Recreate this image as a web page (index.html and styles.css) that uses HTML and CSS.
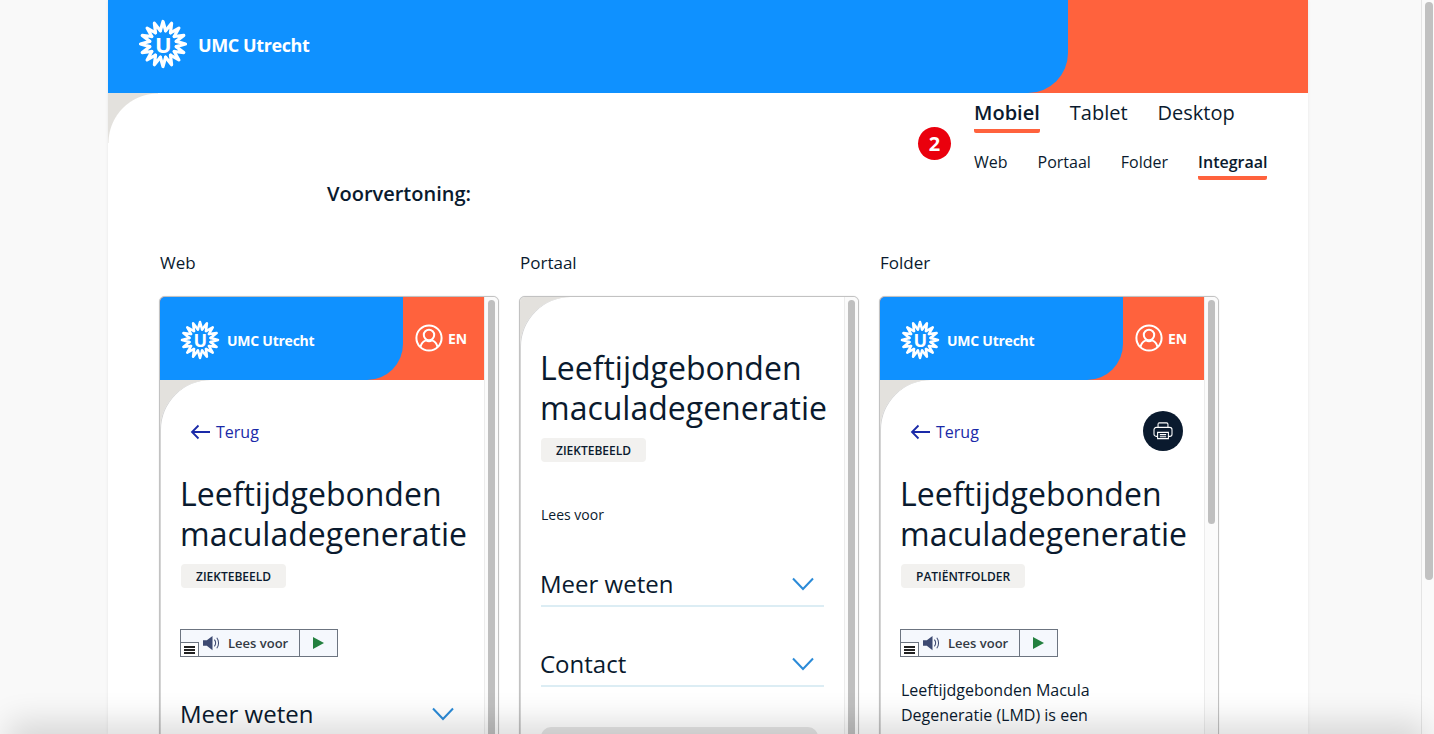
FILE: index.html
```html
<!DOCTYPE html>
<html lang="nl">
<head>
  <meta charset="UTF-8">
  <title>Voorvertoning</title>
  <link rel="stylesheet" href="styles.css">
</head>
<body>
  <svg class="defs" width="0" height="0">
    <defs>
      <path id="ray" d="M22.37 11.760 L25 2.500 L27.630 11.760"/>
      <symbol id="sun" viewBox="0 0 50 50">
        <g fill="none" stroke="#fff" stroke-width="3.200" stroke-linejoin="round" stroke-linecap="round">
          <use href="#ray"/>
          <use href="#ray" transform="rotate(22.5 25 25)"/>
          <use href="#ray" transform="rotate(45 25 25)"/>
          <use href="#ray" transform="rotate(67.5 25 25)"/>
          <use href="#ray" transform="rotate(90 25 25)"/>
          <use href="#ray" transform="rotate(112.5 25 25)"/>
          <use href="#ray" transform="rotate(135 25 25)"/>
          <use href="#ray" transform="rotate(157.5 25 25)"/>
          <use href="#ray" transform="rotate(180 25 25)"/>
          <use href="#ray" transform="rotate(202.5 25 25)"/>
          <use href="#ray" transform="rotate(225 25 25)"/>
          <use href="#ray" transform="rotate(247.5 25 25)"/>
          <use href="#ray" transform="rotate(270 25 25)"/>
          <use href="#ray" transform="rotate(292.5 25 25)"/>
          <use href="#ray" transform="rotate(315 25 25)"/>
          <use href="#ray" transform="rotate(337.5 25 25)"/>
        </g>
      </symbol>
      <symbol id="user" viewBox="0 0 28 28">
        <g fill="none" stroke="#fff" stroke-width="2">
          <circle cx="14" cy="14" r="12.6"/>
          <circle cx="14" cy="11" r="5.2"/>
          <path d="M5.4 23 C6.5 18.8 9 17 11 16.4 M22.6 23 C21.500 18.800 19 17 17 16.400 M11 16.400 C12.800 17.400 15.200 17.400 17 16.400"/>
        </g>
      </symbol>
      <symbol id="chevron" viewBox="0 0 22 14">
        <path d="M1 1.500 L11 12 L21 1.500" fill="none" stroke="#2b8bd8" stroke-width="2"/>
      </symbol>
      <symbol id="speaker" viewBox="0 0 20 16">
        <path d="M0 5 H4 L10 0.500 V15.500 L4 11 H0 Z" fill="#3d4a72"/>
        <path d="M12 4.500 C13.500 6.500 13.500 9.500 12 11.500 M14.500 2.500 C17 5.500 17 10.500 14.500 13.500" fill="none" stroke="#3d4a72" stroke-width="1.100"/>
      </symbol>
    </defs>
  </svg>

  <div class="page">
    <header class="site-header">
      <div class="brand-bar">
        <svg class="logo"><use href="#sun"/></svg>
        <span class="logo-u">U</span>
        <span class="brand-name">UMC Utrecht</span>
      </div>
    </header>

    <main class="content">
      <div class="toolbar">
        <span class="step-badge">2</span>
        <div class="tabs">
          <a class="tab active">Mobiel</a>
          <a class="tab">Tablet</a>
          <a class="tab">Desktop</a>
        </div>
        <div class="subtabs">
          <a class="subtab">Web</a>
          <a class="subtab">Portaal</a>
          <a class="subtab">Folder</a>
          <a class="subtab active">Integraal</a>
        </div>
      </div>

      <h3 class="preview-title">Voorvertoning:</h3>

      <div class="previews">
        <section class="preview">
          <div class="preview-label">Web</div>
          <div class="device">
            <div class="screen">
              <div class="mini-header">
                <div class="mini-brand">
                  <svg class="mini-logo"><use href="#sun"/></svg>
                  <span class="mini-u">U</span>
                  <span class="mini-name">UMC Utrecht</span>
                </div>
                <div class="mini-user">
                  <svg class="user-icon"><use href="#user"/></svg>
                  <span>EN</span>
                </div>
              </div>
              <div class="corner">
                <div class="screen-body">
                  <div class="back-row">
                    <a class="back-link">
                      <svg class="back-arrow" viewBox="0 0 20 16"><path d="M20 8 H2 M8.500 1.500 L2 8 L8.500 14.500" fill="none" stroke="#1a2aa8" stroke-width="1.800"/></svg>
                      Terug
                    </a>
                  </div>
                  <h1 class="doc-title">Leeftijdgebonden maculadegeneratie</h1>
                  <span class="tag">Ziektebeeld</span>
                  <div class="reader">
                    <span class="reader-menu"><i></i><i></i><i></i></span>
                    <span class="reader-label">
                      <svg class="speaker"><use href="#speaker"/></svg>
                      Lees voor
                    </span>
                    <span class="reader-play"><b></b></span>
                  </div>
                  <div class="accordion first"><span>Meer weten</span><svg class="chevron"><use href="#chevron"/></svg></div>
                </div>
              </div>
            </div>
            <div class="scroll-track"><div class="scroll-thumb"></div></div>
          </div>
        </section>

        <section class="preview">
          <div class="preview-label">Portaal</div>
          <div class="device">
            <div class="screen">
              <div class="corner">
                <div class="screen-body portal">
                  <h1 class="doc-title">Leeftijdgebonden maculadegeneratie</h1>
                  <span class="tag">Ziektebeeld</span>
                  <div class="read-link">Lees voor</div>
                  <div class="accordion lined"><span>Meer weten</span><svg class="chevron"><use href="#chevron"/></svg></div>
                  <div class="accordion lined"><span>Contact</span><svg class="chevron"><use href="#chevron"/></svg></div>
                  <div class="grey-block"></div>
                </div>
              </div>
            </div>
            <div class="scroll-track"><div class="scroll-thumb"></div></div>
          </div>
        </section>

        <section class="preview">
          <div class="preview-label">Folder</div>
          <div class="device">
            <div class="screen">
              <div class="mini-header">
                <div class="mini-brand">
                  <svg class="mini-logo"><use href="#sun"/></svg>
                  <span class="mini-u">U</span>
                  <span class="mini-name">UMC Utrecht</span>
                </div>
                <div class="mini-user">
                  <svg class="user-icon"><use href="#user"/></svg>
                  <span>EN</span>
                </div>
              </div>
              <div class="corner">
                <div class="screen-body">
                  <div class="back-row">
                    <a class="back-link">
                      <svg class="back-arrow" viewBox="0 0 20 16"><path d="M20 8 H2 M8.500 1.500 L2 8 L8.500 14.500" fill="none" stroke="#1a2aa8" stroke-width="1.800"/></svg>
                      Terug
                    </a>
                    <span class="print-btn">
                      <svg viewBox="0 0 22 20" width="20" height="18">
                        <g fill="none" stroke="#fff" stroke-width="1.200">
                          <path d="M5.500 6 V2.500 Q5.500 1 7 1 H15 Q16.500 1 16.500 2.500 V6"/>
                          <rect x="1" y="6" width="20" height="10" rx="2.500"/>
                          <path d="M5 11.500 H17 V18.500 H5 Z" fill="#0a1a2e"/>
                          <path d="M7.500 14 H14.500 M7.500 16.300 H14.500"/>
                        </g>
                      </svg>
                    </span>
                  </div>
                  <h1 class="doc-title">Leeftijdgebonden maculadegeneratie</h1>
                  <span class="tag">Patiëntfolder</span>
                  <div class="reader">
                    <span class="reader-menu"><i></i><i></i><i></i></span>
                    <span class="reader-label">
                      <svg class="speaker"><use href="#speaker"/></svg>
                      Lees voor
                    </span>
                    <span class="reader-play"><b></b></span>
                  </div>
                  <p class="doc-text">Leeftijdgebonden Macula<br>Degeneratie (LMD) is een<br>oogziekte waarbij het scherpe</p>
                </div>
              </div>
            </div>
            <div class="scroll-track"><div class="scroll-thumb short"></div></div>
          </div>
        </section>
      </div>
    </main>
  </div>

  <div class="page-scrollbar"><div class="page-thumb"></div></div>
  <div class="bottom-shade"></div>
</body>
</html>
```

FILE: styles.css
```css
* {
  box-sizing: border-box;
}

html, body {
  height: 734px;
  margin: 0;
  overflow: hidden;
}

body {
  font-family: 'Open Sans', sans-serif;
  color: #0a1a2e;
  background: #f9f9f9;
  position: relative;
}

.defs {
  position: absolute;
}

.page {
  width: 1200px;
  height: 734px;
  margin-left: 108px;
  background: #fff;
  box-shadow: 0 0 3px rgba(0,0,0,0.08);
  overflow: hidden;
}

/* big header */
.site-header {
  height: 93px;
  background: #ff623d;
}

.brand-bar {
  position: relative;
  display: flex;
  align-items: center;
  width: 960px;
  height: 93px;
  padding: 0 0 5px 30px;
  background: #0f91ff;
  border-bottom-right-radius: 40px;
}

.logo {
  width: 50px;
  height: 50px;
}

.logo-u {
  position: absolute;
  left: 47px;
  top: 26px;
  font-size: 22px;
  line-height: 36px;
  font-weight: 700;
  color: #fff;
}

.brand-name {
  margin: 2px 0 0 10px;
  font-size: 18px;
  font-weight: 700;
  letter-spacing: -0.4px;
  color: #fff;
}

/* page content */
.content {
  position: relative;
  height: 641px;
  padding-left: 51px;
  background: #fff;
}

.content::before {
  content: "";
  position: absolute;
  left: 0;
  top: 0;
  width: 50px;
  height: 50px;
  background: radial-gradient(circle at 100% 100%, transparent 49px, #e3e1dd 50px);
}

.toolbar {
  position: absolute;
  left: 866px;
  top: 0;
}

.step-badge {
  position: absolute;
  left: -56px;
  top: 34px;
  width: 33px;
  height: 33px;
  border-radius: 50%;
  background: #ea000d;
  color: #fff;
  font-size: 20px;
  line-height: 33px;
  font-weight: 700;
  text-align: center;
}

.tabs {
  display: flex;
  gap: 30px;
  white-space: nowrap;
}

.tab {
  height: 40px;
  padding-top: 5px;
  font-size: 20px;
  line-height: 29px;
  color: #0a1a2e;
  border-bottom: 4px solid transparent;
  border-radius: 2px;
}

.subtabs {
  display: flex;
  gap: 30px;
  margin-top: 14px;
  white-space: nowrap;
}

.subtab {
  height: 33px;
  font-size: 16px;
  line-height: 22px;
  padding-top: 4px;
  border-bottom: 4px solid transparent;
  border-radius: 2px;
}

.tab.active, .subtab.active {
  font-weight: 600;
  border-bottom-color: #ff623d;
}

.preview-title {
  margin: 0;
  padding: 87px 0 0 168px;
  font-size: 20px;
  line-height: 28px;
  font-weight: 600;
}

.previews {
  display: flex;
  gap: 20px;
  margin-top: 44px;
}

.preview {
  width: 340px;
}

.preview-label {
  padding-left: 1px;
  font-size: 17px;
  line-height: 22px;
  margin-bottom: 22px;
}

.device {
  display: flex;
  height: 520px;
  border: 1px solid #c2c2c2;
  border-radius: 6px;
  box-shadow: 0 0 1px rgba(0,0,0,0.25);
  overflow: hidden;
  background: #fff;
}

.screen {
  width: 324px;
  flex-shrink: 0;
}

.scroll-track {
  flex: 1;
  padding: 3px 3px 0 3px;
  background: #fbfbfb;
  border-left: 1px solid #ececec;
}

.scroll-thumb {
  height: 600px;
  background: #bfbfbf;
  border-radius: 4px;
}

.scroll-thumb.short {
  height: 224px;
}

/* header inside the previews */
.mini-header {
  display: flex;
  height: 83px;
  background: #ff623d;
}

.mini-brand {
  position: relative;
  display: flex;
  align-items: center;
  width: 243px;
  padding: 3px 0 0 20px;
  background: #0f91ff;
  border-bottom-right-radius: 36px;
}

.mini-logo {
  width: 40px;
  height: 40px;
}

.mini-u {
  position: absolute;
  left: 33.500px;
  top: 25px;
  font-size: 18px;
  line-height: 36px;
  font-weight: 700;
  color: #fff;
}

.mini-name {
  margin-left: 7px;
  font-size: 14px;
  font-weight: 700;
  letter-spacing: -0.25px;
  color: #fff;
}

.mini-user {
  display: flex;
  align-items: center;
  gap: 5px;
  padding: 0 0 1px 12px;
  color: #fff;
  font-size: 14px;
  font-weight: 700;
}

.user-icon {
  width: 28px;
  height: 28px;
}

.corner {
  background: #e3e1dd;
}

.screen-body {
  height: 600px;
  padding: 0 21px;
  background: #fff;
  border-top-left-radius: 50px;
  box-shadow: inset 1px 0 0 #d4d4d4;
}

.screen-body.portal {
  padding-top: 51px;
  height: 700px;
}

.back-row {
  display: flex;
  justify-content: space-between;
  align-items: center;
  height: 40px;
  padding: 32px 0 0 9px;
  box-sizing: content-box;
  width: 283px;
}

.back-link {
  display: flex;
  align-items: center;
  gap: 6px;
  font-size: 16px;
  font-weight: 500;
  color: #1a2aa8;
}

.back-arrow {
  width: 20px;
  height: 16px;
}

.print-btn {
  display: flex;
  align-items: center;
  justify-content: center;
  width: 40px;
  height: 40px;
  margin: 0 10px 3px 0;
  border-radius: 50%;
  background: #0a1a2e;
}

.doc-title {
  margin: 22px 0 0 -1px;
  font-size: 32px;
  line-height: 40px;
  font-weight: 400;
}

.portal .doc-title {
  margin-top: 0;
}

.tag {
  display: inline-block;
  margin-top: 10px;
  padding: 0 15px;
  height: 24px;
  border-radius: 4px;
  background: #f2f1ef;
  font-size: 12px;
  line-height: 25px;
  font-weight: 600;
  text-transform: uppercase;
}

/* lees voor knop */
.reader {
  position: relative;
  display: flex;
  width: 158px;
  height: 28px;
  margin: 41px 0 0 -1px;
  border: 1px solid #6c7480;
  background: #f5f8fd;
  font-size: 13px;
  font-weight: 600;
  color: #333a44;
}

.reader-label {
  display: flex;
  align-items: center;
  gap: 6px;
  width: 119px;
  padding-left: 22px;
  border-right: 1px solid #6c7480;
}

.speaker {
  width: 19px;
  height: 16px;
}

.reader-play {
  display: flex;
  align-items: center;
  justify-content: center;
  flex: 1;
}

.reader-play b {
  border-left: 11px solid #23803f;
  border-top: 6px solid transparent;
  border-bottom: 6px solid transparent;
}

.reader-menu {
  position: absolute;
  left: 0;
  bottom: 0;
  display: flex;
  flex-direction: column;
  justify-content: center;
  gap: 1px;
  width: 18px;
  height: 14px;
  padding: 0 3px;
  background: #fff;
  border: 1px solid #6c7480;
  border-width: 1px 1px 0 0;
}

.reader-menu i {
  height: 2px;
  background: #222;
}

.read-link {
  margin-top: 42px;
  font-size: 14px;
  line-height: 22px;
}

.accordion {
  display: flex;
  justify-content: space-between;
  align-items: center;
  font-size: 24px;
  line-height: 34px;
}

.accordion span {
  margin-left: -1px;
}

.accordion.first {
  margin-top: 40px;
  padding-right: 9px;
}

.accordion.lined {
  width: 283px;
  height: 42px;
  margin-top: 38px;
  padding-right: 10px;
  padding-bottom: 2px;
  border-bottom: 2px solid #dcedf4;
}

.read-link + .accordion.lined {
  margin-top: 39px;
}

.chevron {
  width: 22px;
  height: 14px;
}

.grey-block {
  width: 277px;
  height: 60px;
  margin-top: 40px;
  border-radius: 10px 10px 0 0;
  background: #e6e6e6;
}

.doc-text {
  margin: 21px 0 0;
  font-size: 16px;
  line-height: 25px;
}

/* browser chrome */
.page-scrollbar {
  position: absolute;
  right: 0;
  top: 0;
  width: 13px;
  height: 734px;
  padding: 2px 1px 0 3px;
  background: #fafafa;
  border-left: 1px solid #e4e4e4;
}

.page-thumb {
  height: 578px;
  background: #c1c1c1;
  border-radius: 5px;
}

.bottom-shade {
  position: absolute;
  left: 20px;
  right: 20px;
  bottom: -20px;
  height: 20px;
  box-shadow: 0 0 32px 12px rgba(0,0,0,0.14);
}
```
